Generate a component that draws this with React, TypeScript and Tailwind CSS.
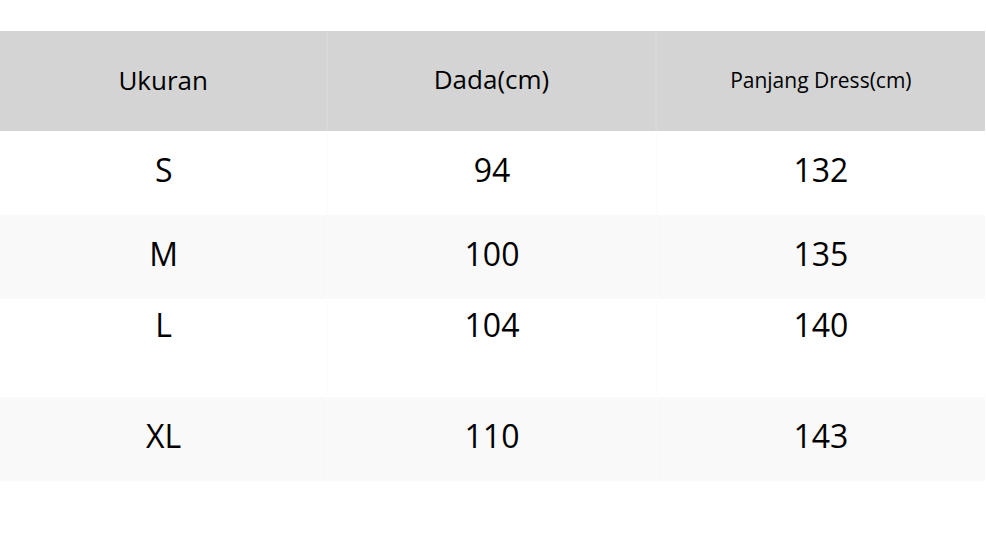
const rows = [
  { size: "S", dada: "94", panjang: "132", bg: "bg-white", h: "h-[84px]", align: "items-center pb-[7px]" },
  { size: "M", dada: "100", panjang: "135", bg: "bg-[#f9f9f9]", h: "h-[84px]", align: "items-center pb-[7px]" },
  { size: "L", dada: "104", panjang: "140", bg: "bg-white", h: "h-[98px]", align: "items-start pt-[2px]" },
  { size: "XL", dada: "110", panjang: "143", bg: "bg-[#f9f9f9]", h: "h-[84px]", align: "items-center pb-[7px]" },
];

export default function App() {
  return (
    <div className="w-[986px] h-[549px] bg-white pt-[31px] font-['Open_Sans',sans-serif] text-black">
      <div className="w-[985px]">
        <div className="grid grid-cols-3 h-[100px] bg-[#d4d4d4]">
          <div className="flex items-center justify-center border-r-2 border-[#d9d9d9] text-[26px] pb-[2px]">Ukuran</div>
          <div className="flex items-center justify-center border-r-2 border-[#d9d9d9] text-[26px] pb-[3px]">Dada(cm)</div>
          <div className="flex items-center justify-center text-[21px] pb-[1px]">Panjang Dress(cm)</div>
        </div>
        {rows.map((r) => (
          <div key={r.size} className={`grid grid-cols-3 ${r.h} ${r.bg}`}>
            <div className={`flex justify-center ${r.align} text-[32px] border-r border-[#fbfbfb]`}>{r.size}</div>
            <div className={`flex justify-center ${r.align} text-[32px] border-r border-[#fbfbfb]`}>{r.dada}</div>
            <div className={`flex justify-center ${r.align} text-[32px]`}>{r.panjang}</div>
          </div>
        ))}
      </div>
    </div>
  );
}
